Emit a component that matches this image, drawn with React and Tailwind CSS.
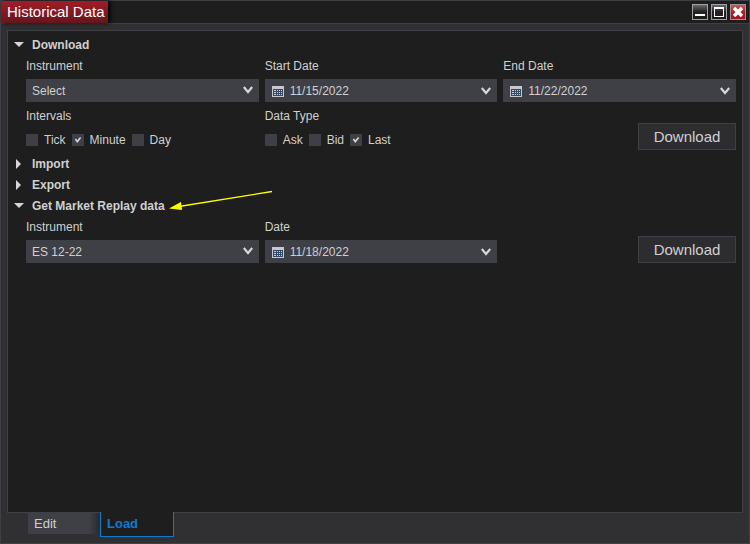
import { useState } from "react"

const field = "h-[23px] w-full bg-[#3f3f46] text-[#d0d0d0] rounded-none outline-none"

function Chevron() {
  return (
    <svg viewBox="0 0 10 8" className="w-[10px] h-2" fill="none" stroke="#d6d6d6" strokeWidth="2.2">
      <path d="M0.8 1 L5 6 L9.2 1" />
    </svg>
  )
}

function CalendarIcon() {
  return (
    <svg viewBox="0 0 12 12" className="w-3 h-3" shapeRendering="crispEdges">
      <rect y="1" width="12" height="11" fill="#c8c8c8" />
      <rect x="1" y="4" width="10" height="7" fill="#34496a" />
      <path
        d="M2 5h2v1H2zM5 5h1v1H5zM7 5h1v1H7zM9 5h1v1H9zM2 7h2v1H2zM5 7h1v1H5zM7 7h1v1H7zM9 7h1v1H9zM2 9h2v1H2zM5 9h1v1H5zM7 9h1v1H7zM9 9h1v1H9z"
        fill="#c4d2de"
      />
    </svg>
  )
}

function SelectField({ id, label, options }) {
  return (
    <div className="min-w-0">
      <label htmlFor={id} className="block h-6 leading-[23px]">{label}</label>
      <div className="relative">
        <select id={id} className={`${field} block appearance-none pl-[6px] pr-6`}>
          {options.map((o) => (
            <option key={o}>{o}</option>
          ))}
        </select>
        <span className="absolute right-[6px] top-[7px] pointer-events-none">
          <Chevron />
        </span>
      </div>
    </div>
  )
}

function DateField({ id, label, value }) {
  return (
    <div className="min-w-0">
      <label htmlFor={id} className="block h-6 leading-[23px]">{label}</label>
      <div className={`${field} flex items-center pl-[7px] pr-1 gap-[6px]`}>
        <CalendarIcon />
        <input id={id} type="text" defaultValue={value} className="min-w-0 flex-1 bg-transparent outline-none" />
        <button type="button" aria-label={`Open ${label}`} className="h-full w-3 flex items-center">
          <Chevron />
        </button>
      </div>
    </div>
  )
}

function Check({ label, checked }) {
  return (
    <label className="flex items-center gap-[6px]">
      <span className="relative flex">
        <input type="checkbox" defaultChecked={checked} className="peer appearance-none w-3 h-3 bg-[#3f3f46]" />
        <svg
          viewBox="0 0 12 12"
          className="absolute inset-0 w-3 h-3 hidden peer-checked:block pointer-events-none"
          fill="none"
          stroke="#d6d6d6"
          strokeWidth="1.6"
        >
          <path d="M3.4 5 L5.3 7.6 L8.6 3.6" />
        </svg>
      </span>
      {label}
    </label>
  )
}

function CheckGroup({ title, items }) {
  return (
    <fieldset>
      <legend className="h-6 leading-[23px]">{title}</legend>
      <div className="flex items-center gap-[6px] h-[21px]">
        {items.map((i) => (
          <Check key={i.label} {...i} />
        ))}
      </div>
    </fieldset>
  )
}

function DownloadButton() {
  return (
    <button
      type="button"
      className="justify-self-end self-end w-[98px] h-[27px] bg-[#2d2d30] border border-[#3f3f46] text-[15px] leading-none text-[#d0d0d0]"
    >
      Download
    </button>
  )
}

function Section({ title, defaultOpen = false, marker, children }) {
  const [open, setOpen] = useState(defaultOpen)
  return (
    <section>
      <h2 className="flex">
        <button
          type="button"
          aria-expanded={open}
          onClick={() => setOpen(!open)}
          className="relative flex items-center h-[21px] font-bold"
        >
          <span className="w-6 pl-[6px] flex">
            {open ? (
              <svg viewBox="0 0 10 5" className="w-[10px] h-[5px]" fill="#d6d6d6">
                <path d="M0 0H10L5 5Z" />
              </svg>
            ) : (
              <svg viewBox="0 0 10 10" className="w-[10px] h-[10px]" fill="#d6d6d6">
                <path d="M2 0V10L7 5Z" />
              </svg>
            )}
          </span>
          {title}
          {marker}
        </button>
      </h2>
      {open && children && <div className="pl-[18px] pr-[6px]">{children}</div>}
    </section>
  )
}

function ArrowMarker() {
  return (
    <svg
      viewBox="0 0 104 20"
      className="absolute left-full bottom-0 ml-1 mb-[6px] w-[104px] h-5 pointer-events-none"
      fill="#ffff00"
    >
      <path d="M10 16.5 L103 1.5" stroke="#ffff00" strokeWidth="1.3" />
      <path d="M0 18.5 L12 12 L13 20Z" />
    </svg>
  )
}

const winButton =
  "w-4 h-4 border border-[#a0a0a0] bg-gradient-to-b from-[#6a6a6c] via-[#242022] to-[#1e1a1c] flex items-center justify-center"

function TitleBar() {
  return (
    <header className="flex items-stretch justify-between h-[23px] bg-[#1e1e1e] border-b border-[#3f3f46]">
      <h1 className="pl-[6px] pr-[3px] bg-gradient-to-b from-[#a31c26] to-[#66151c] text-white text-[15px] leading-[22px] shadow-[2px_0_4px_#000000]">
        Historical Data
      </h1>
      <div className="flex items-center gap-[3px] pr-[3px]">
        <button type="button" aria-label="Minimize" className={winButton}>
          <svg viewBox="0 0 14 14" className="w-[14px] h-[14px] shrink-0" fill="#ffffff">
            <path d="M2 9H12V11H2Z" />
          </svg>
        </button>
        <button type="button" aria-label="Maximize" className={winButton}>
          <svg viewBox="0 0 14 14" className="w-[14px] h-[14px] shrink-0" fill="#ffffff">
            <path d="M2 2H12V12H2ZM3 4V11H11V4Z" fillRule="evenodd" />
          </svg>
        </button>
        <button
          type="button"
          aria-label="Close"
          className="w-4 h-4 border border-[#a09090] bg-gradient-to-b from-[#c45a60] via-[#b01c26] to-[#a01820] flex items-center justify-center"
        >
          <svg viewBox="0 0 14 14" className="w-[14px] h-[14px] shrink-0" stroke="#ffffff" strokeWidth="3.4">
            <path d="M3 3L11 11M11 3L3 11" />
          </svg>
        </button>
      </div>
    </header>
  )
}

export default function App() {
  return (
    <div className="min-h-screen flex flex-col bg-[#303032] border border-[#3f3f46] font-['Liberation_Sans',Arial,sans-serif] text-xs text-[#d0d0d0]">
      <TitleBar />
      <main className="flex-1 flex flex-col px-[6px] pt-[6px]">
        <div className="flex-1 bg-[#1e1e1e] border border-[#3f3f46] pt-[3px]">
          <Section title="Download" defaultOpen>
            <form className="grid grid-cols-3 gap-x-[6px] gap-y-[3px] pb-[3px]">
              <SelectField id="instrument" label="Instrument" options={["Select"]} />
              <DateField id="start" label="Start Date" value="11/15/2022" />
              <DateField id="end" label="End Date" value="11/22/2022" />
              <CheckGroup
                title="Intervals"
                items={[{ label: "Tick" }, { label: "Minute", checked: true }, { label: "Day" }]}
              />
              <CheckGroup
                title="Data Type"
                items={[{ label: "Ask" }, { label: "Bid" }, { label: "Last", checked: true }]}
              />
              <DownloadButton />
            </form>
          </Section>
          <Section title="Import" />
          <Section title="Export" />
          <Section title="Get Market Replay data" defaultOpen marker={<ArrowMarker />}>
            <form className="grid grid-cols-3 gap-x-[6px]">
              <SelectField id="replay-instrument" label="Instrument" options={["ES 12-22"]} />
              <DateField id="replay-date" label="Date" value="11/18/2022" />
              <DownloadButton />
            </form>
          </Section>
        </div>
      </main>
      <nav className="flex items-start h-[30px] pl-[27px] text-[13px]" role="tablist">
        <button
          type="button"
          role="tab"
          aria-selected="false"
          className="w-[72px] h-[21px] pl-[6px] text-left bg-gradient-to-r from-[#3f3f46] from-85% to-[#29292c]"
        >
          Edit
        </button>
        <button
          type="button"
          role="tab"
          aria-selected="true"
          className="relative -mt-px w-[74px] h-[25px] pl-[6px] text-left font-bold text-[#0e7acc] bg-[#1e1e1e] border border-t-0 border-[#0e7acc]"
        >
          Load
        </button>
      </nav>
    </div>
  )
}
